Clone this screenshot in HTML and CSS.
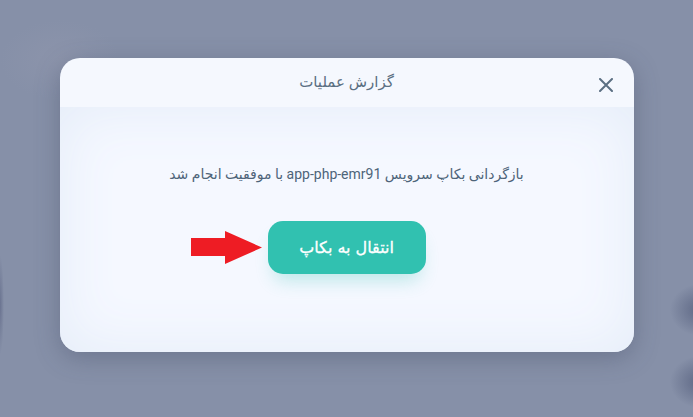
FILE: index.html
```html
<!DOCTYPE html>
<html lang="fa" dir="rtl">
<head>
    <meta charset="UTF-8">
    <title>گزارش عملیات</title>
    <link rel="stylesheet" href="styles.css">
</head>
<body>
    <div class="backdrop">
        <div class="modal">
            <div class="modal_head">
                <h3 class="modal_title">گزارش عملیات</h3>
                <button class="close_btn" aria-label="close">
                    <svg width="14" height="14" viewBox="0 0 14 14"><path d="M1 1L13 13M13 1L1 13" stroke="#5b6f82" stroke-width="2" stroke-linecap="round"/></svg>
                </button>
            </div>
            <div class="modal_body">
                <p class="message">بازگردانی بکاپ سرویس <span class="ltr">app-php-emr91</span> با موفقیت انجام شد</p>
                <div class="action_row">
                    <button class="go_btn">انتقال به بکاپ</button>
                    <svg class="arrow" width="72" height="33" viewBox="0 0 72 33"><path d="M0 7H34V0L71 16.5L34 33V25H0Z" fill="#ee1c24"/></svg>
                </div>
            </div>
        </div>
    </div>
</body>
</html>
```

FILE: styles.css
```css
body { margin: 0; font-family: Roboto, "DejaVu Sans", sans-serif; }
.backdrop {
    width: 693px; height: 417px; overflow: hidden;
    background:
        radial-gradient(ellipse 30px 26px at 700px 310px, #5e6885, transparent),
        radial-gradient(ellipse 30px 26px at 700px 382px, #5e6885, transparent),
        radial-gradient(ellipse 4px 50px at 0px 305px, #6a7390, transparent),
        radial-gradient(ellipse 60px 40px at 60px 60px, #8c94ab, transparent),
        #8690a8;
    display: flex; justify-content: center; align-items: flex-start;
    padding-top: 58px; box-sizing: border-box;
}
.modal {
    width: 574px; height: 294px; border-radius: 20px; overflow: hidden;
    display: flex; flex-direction: column;
    box-shadow: 0 6px 24px rgba(60, 68, 95, 0.35);
}
.modal_head {
    height: 49px; background: #f5f8fe; position: relative;
    display: flex; align-items: center; justify-content: center;
}
.modal_title { margin: 0; font-size: 15px; font-weight: 400; color: #5b6f82; padding-bottom: 2px; }
.close_btn {
    position: absolute; right: 21px; top: 20px; padding: 0; border: none; background: none;
    width: 14px; height: 14px; cursor: pointer; display: flex;
}
.modal_body {
    flex: 1; background: #f5f8ff;
    box-shadow: inset 0 0 60px #e4ecf8;
    display: flex; flex-direction: column; align-items: center;
}
.message { margin: 59px 0 0; font-size: 14px; color: #4e6479; }
.ltr { unicode-bidi: isolate; direction: ltr; font-family: Roboto, sans-serif; }
.action_row { display: flex; align-items: center; gap: 5px; margin-top: 39px; margin-right: 77px; }
.go_btn {
    width: 158px; height: 53px; border: none; border-radius: 15px; background: #31c1b0;
    color: #fff; font-family: "DejaVu Sans", sans-serif; font-size: 16px; font-weight: 400;
    -webkit-text-stroke: 0.3px #fff;
    box-shadow: 0 12px 18px -6px rgba(49, 193, 176, 0.3); cursor: pointer;
}
.arrow { display: block; }
```
